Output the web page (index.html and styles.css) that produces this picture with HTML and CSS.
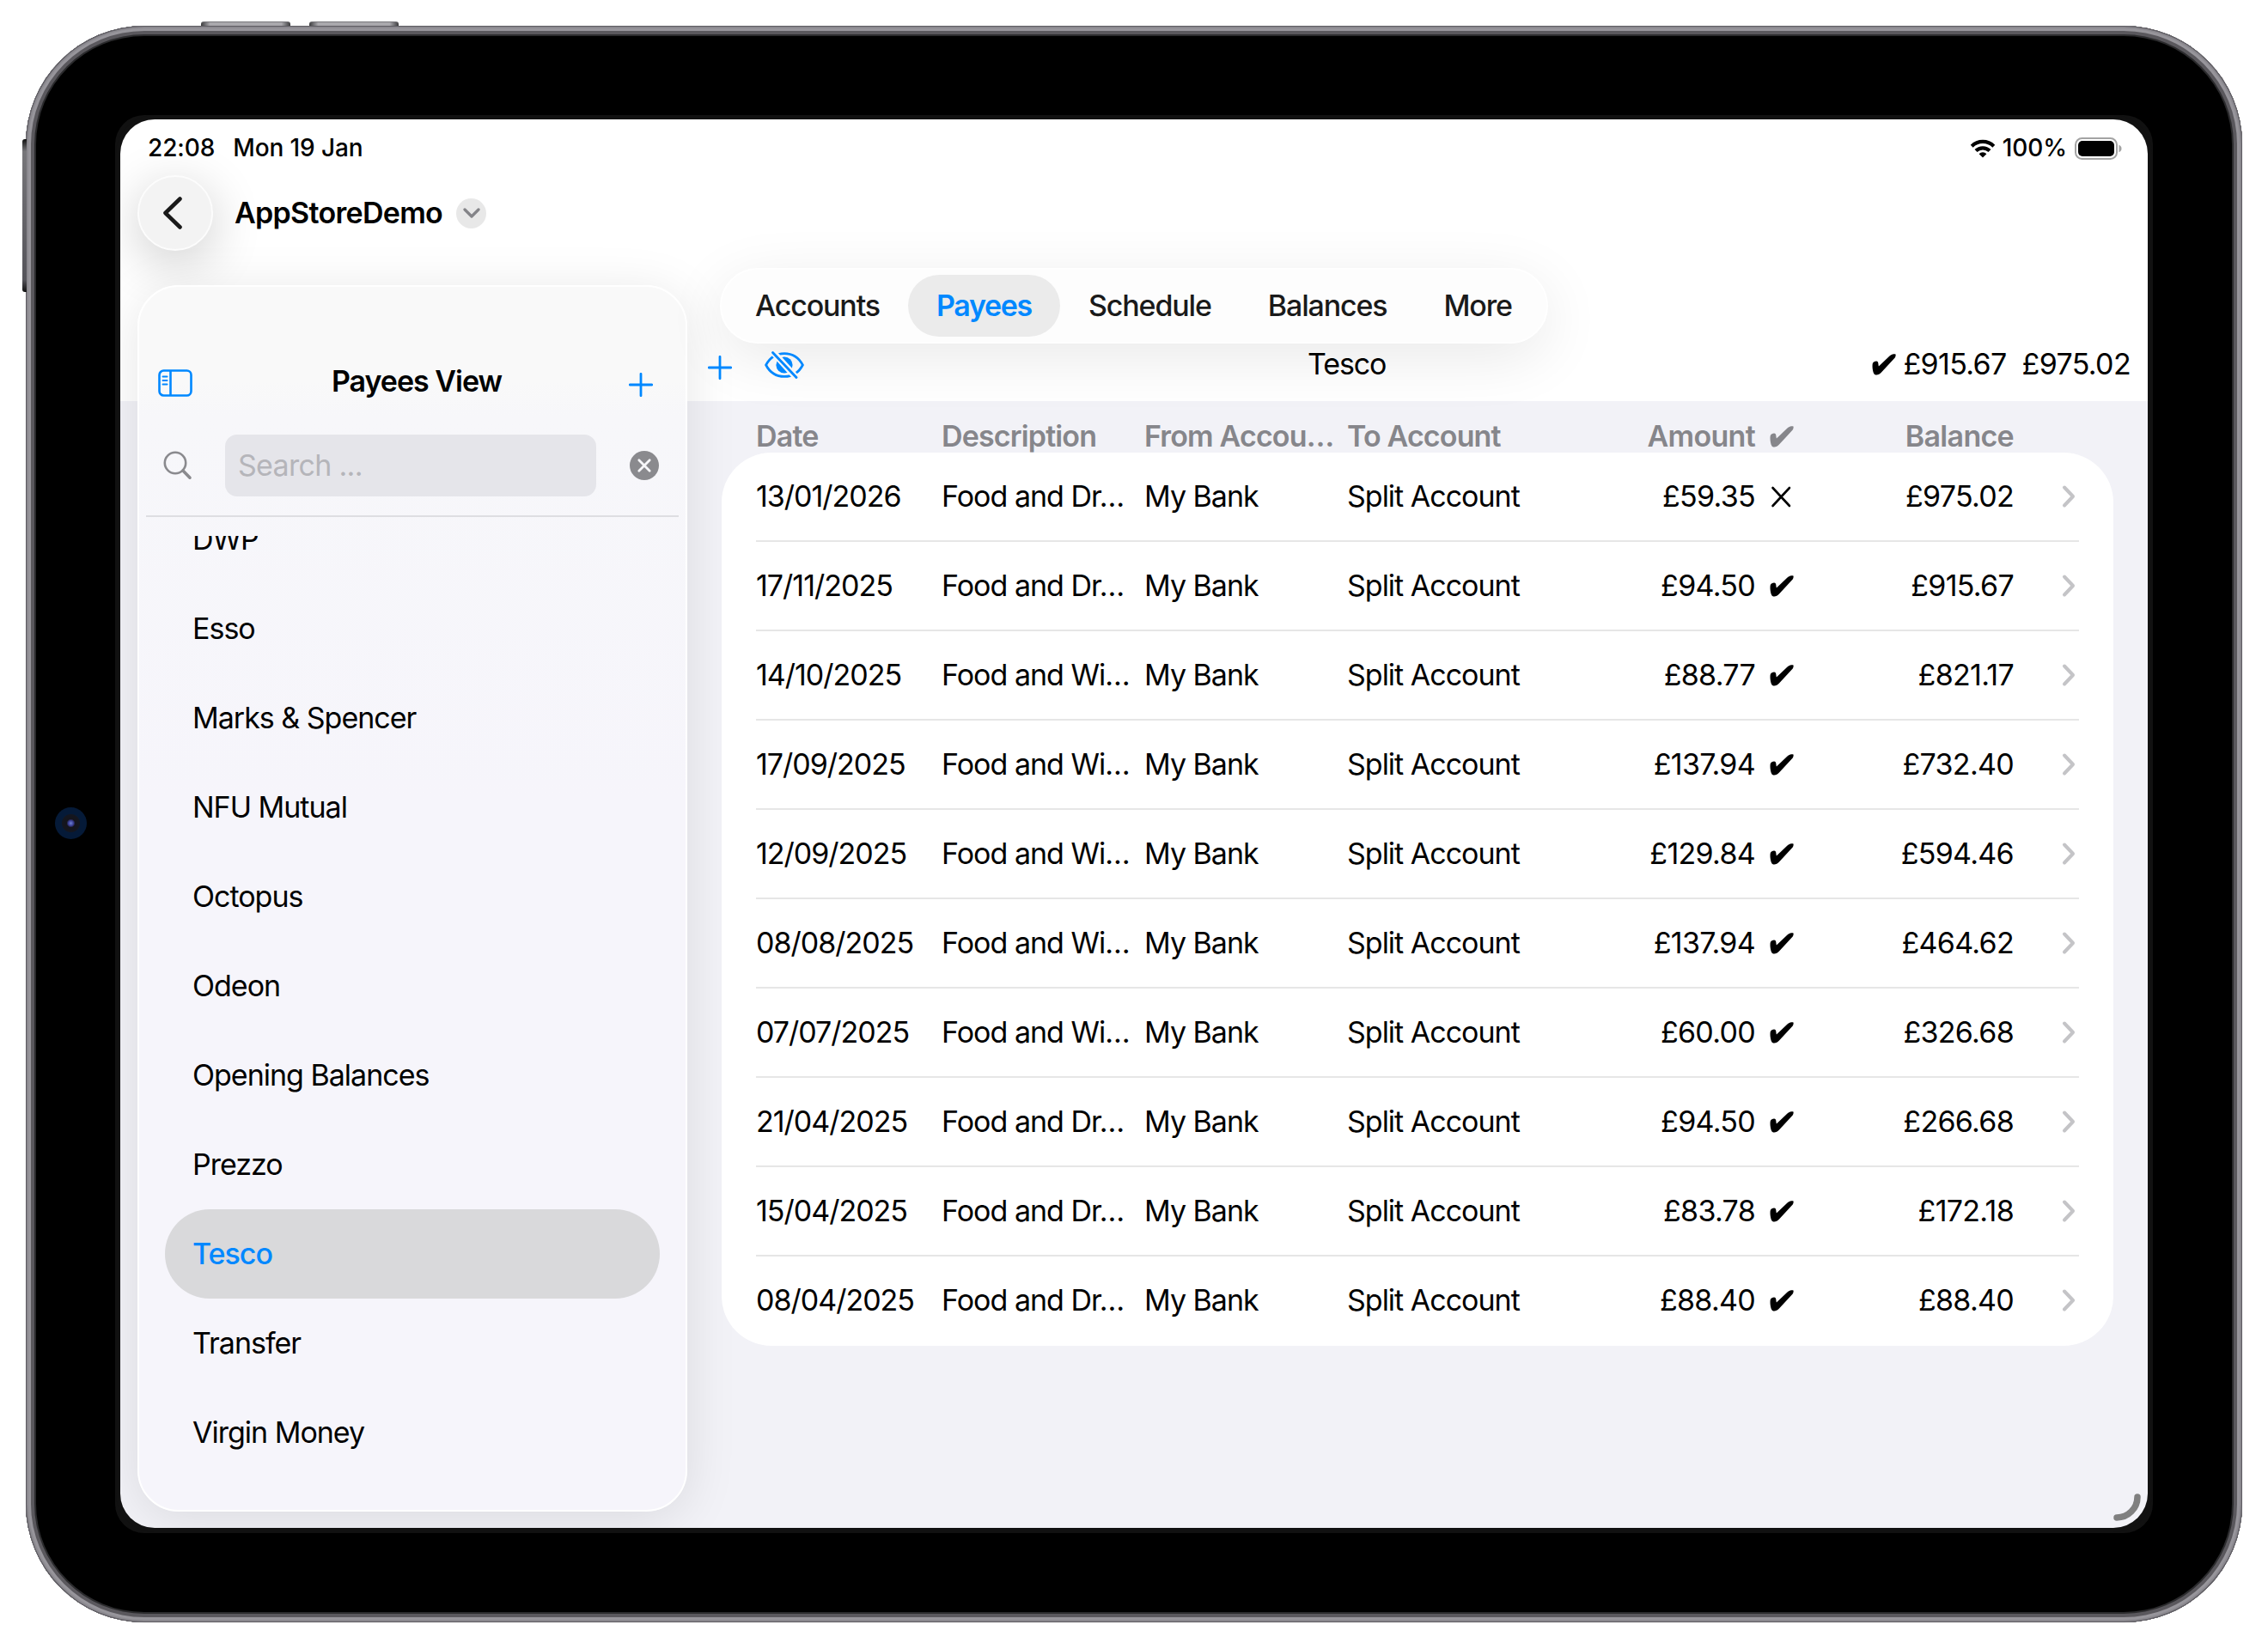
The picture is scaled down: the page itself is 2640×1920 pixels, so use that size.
FILE: index.html
```html
<!DOCTYPE html>
<html lang="en">
<head>
  <meta charset="UTF-8">
  <meta name="viewport" content="width=device-width, initial-scale=1.0">
  <title>AppStoreDemo - Payees</title>
  <link rel="stylesheet" href="styles.css">
</head>
<body>

<!-- shared icons -->
<svg class="sprite">
  <symbol id="tick" viewBox="0 0 28 25">
    <path d="M.8 11.2C1.6 8.8 5.8 7.6 6.9 9.4C7.5 10.6 7.4 12.6 7.9 14.6L20.5 2.4C22.6.5 25.8 0 27.5.4C28 2 27.2 4 25.8 5.6L11 21.6C8.8 24 5.4 25.4 3.2 24C1 22.6 0 14 .8 11.2Z" fill="currentColor"/>
  </symbol>
  <symbol id="cross" viewBox="0 0 28 25">
    <path d="M3.500 2L23 23M23 2L3.500 23" stroke="currentColor" stroke-width="2.6" stroke-linecap="round"/>
  </symbol>
  <symbol id="more" viewBox="0 0 16 28">
    <path d="M3 3.5L13 14L3 24.5" fill="none" stroke="#c4c4c7" stroke-width="4" stroke-linecap="round" stroke-linejoin="round"/>
  </symbol>
  <symbol id="plus" viewBox="0 0 28 28">
    <path d="M14 1.3V26.7M1.3 14H26.7" stroke="#0088ff" stroke-width="2.8" stroke-linecap="round"/>
  </symbol>
</svg>

<div class="device">
  <i class="key key-up"></i>
  <i class="key key-down"></i>
  <i class="key key-power"></i>
  <i class="camera"></i>

  <div class="screen">
    <header class="status">
      <span class="time">22:08</span>
      <span class="day">Mon 19 Jan</span>
      <svg class="wifi" viewBox="0 0 30 22">
        <g fill="none" stroke="#000" stroke-width="4.2">
          <path d="M2.2 8.2A18.2 18.2 0 0 1 27.8 8.2"/>
          <path d="M7 13.6A11.4 11.4 0 0 1 23 13.6"/>
        </g>
        <path d="M15 21.5L10.6 17.2A6.2 6.2 0 0 1 19.4 17.2Z"/>
      </svg>
      <span class="percent">100%</span>
      <svg class="battery" viewBox="0 0 56 26">
        <rect x="1" y="1" width="48" height="24" rx="7.5" fill="none" stroke="#a3a3a3" stroke-width="2"/>
        <rect x="4" y="4" width="42" height="18" rx="5"/>
        <path d="M51.500 8.800Q54.500 10 54.500 13T51.500 17.200Z" fill="#a3a3a3"/>
      </svg>
    </header>

    <div class="navbar">
      <button class="back">
        <svg width="26" height="42" viewBox="0 0 26 42"><path d="M21.500 4.500L4.500 21L21.500 37.500" fill="none" stroke="#1a1a1a" stroke-width="4.600" stroke-linecap="round" stroke-linejoin="round"/></svg>
      </button>
      <h1>AppStoreDemo</h1>
      <span class="dropdown">
        <svg width="20" height="12" viewBox="0 0 20 12"><path d="M2 2L10 10L18 2" fill="none" stroke="#848488" stroke-width="3.200" stroke-linecap="round" stroke-linejoin="round"/></svg>
      </span>
    </div>

    <div class="split">
      <aside class="sidebar">
        <div class="sidebar-head">
          <svg class="toggle" viewBox="0 0 40 32">
            <g fill="none" stroke="#0088ff" stroke-width="2.600">
              <rect x="1.500" y="1.500" width="37" height="29" rx="5"/>
              <path d="M14.500 1.500V30.500"/>
              <path d="M5.500 8.500H10.500M5.500 13H10.500M5.500 17.500H10.500" stroke-width="2" stroke-linecap="round"/>
            </g>
          </svg>
          <h2>Payees View</h2>
          <svg class="plus"><use href="#plus"/></svg>
        </div>
        <div class="search">
          <svg class="glass" viewBox="0 0 34 34">
            <g fill="none" stroke="#8a8a8e" stroke-linecap="round">
              <circle cx="14" cy="14" r="12.200" stroke-width="2.600"/>
              <path d="M23 23L31 31.200" stroke-width="3.600"/>
            </g>
          </svg>
          <div class="search-field">Search ...</div>
          <svg class="clear" viewBox="0 0 34 34">
            <circle cx="17" cy="17" r="17" fill="#8a8a8e"/>
            <path d="M10.800 10.800L23.200 23.200M23.200 10.800L10.800 23.200" stroke="#f7f7fa" stroke-width="2.800" stroke-linecap="round"/>
          </svg>
        </div>
        <ul class="payees">
          <li>DWP</li>
          <li>Esso</li>
          <li>Marks &amp; Spencer</li>
          <li>NFU Mutual</li>
          <li>Octopus</li>
          <li>Odeon</li>
          <li>Opening Balances</li>
          <li>Prezzo</li>
          <li class="selected">Tesco</li>
          <li>Transfer</li>
          <li>Virgin Money</li>
        </ul>
      </aside>

      <main class="detail">
        <nav class="tabs">
          <a>Accounts</a>
          <a class="active">Payees</a>
          <a>Schedule</a>
          <a>Balances</a>
          <a>More</a>
        </nav>

        <div class="toolbar">
          <svg class="plus"><use href="#plus"/></svg>
          <svg class="eye" viewBox="0 0 46 32">
            <path d="M1.600 16C6 7.600 14 2.600 23 2.600S40 7.600 44.400 16C40 24.400 32 29.400 23 29.400S6 24.400 1.600 16Z" fill="none" stroke="#0088ff" stroke-width="2.700"/>
            <circle cx="23" cy="16" r="9.600" fill="#0088ff"/>
            <path d="M7.500 -1.500L39 33" stroke="#f7f7f7" stroke-width="7.600"/>
            <path d="M9.500 1.500L37 30.500" stroke="#0088ff" stroke-width="2.800" stroke-linecap="round"/>
          </svg>
          <span class="name">Tesco</span>
          <svg class="mark"><use href="#tick"/></svg>
          <span class="cleared">£915.67</span>
          <span class="total">£975.02</span>
        </div>

        <div class="row head">
          <span>Date</span><span>Description</span><span>From Accou…</span><span>To Account</span><span class="num">Amount</span><svg class="mark"><use href="#tick"/></svg><span class="num">Balance</span>
        </div>
        <div class="table">
          <div class="row">
            <span>13/01/2026</span><span>Food and Dr…</span><span>My Bank</span><span>Split Account</span><span class="num">£59.35</span><svg class="mark"><use href="#cross"/></svg><span class="num">£975.02</span><svg class="more"><use href="#more"/></svg>
          </div>
          <div class="row">
            <span>17/11/2025</span><span>Food and Dr…</span><span>My Bank</span><span>Split Account</span><span class="num">£94.50</span><svg class="mark"><use href="#tick"/></svg><span class="num">£915.67</span><svg class="more"><use href="#more"/></svg>
          </div>
          <div class="row">
            <span>14/10/2025</span><span>Food and Wi…</span><span>My Bank</span><span>Split Account</span><span class="num">£88.77</span><svg class="mark"><use href="#tick"/></svg><span class="num">£821.17</span><svg class="more"><use href="#more"/></svg>
          </div>
          <div class="row">
            <span>17/09/2025</span><span>Food and Wi…</span><span>My Bank</span><span>Split Account</span><span class="num">£137.94</span><svg class="mark"><use href="#tick"/></svg><span class="num">£732.40</span><svg class="more"><use href="#more"/></svg>
          </div>
          <div class="row">
            <span>12/09/2025</span><span>Food and Wi…</span><span>My Bank</span><span>Split Account</span><span class="num">£129.84</span><svg class="mark"><use href="#tick"/></svg><span class="num">£594.46</span><svg class="more"><use href="#more"/></svg>
          </div>
          <div class="row">
            <span>08/08/2025</span><span>Food and Wi…</span><span>My Bank</span><span>Split Account</span><span class="num">£137.94</span><svg class="mark"><use href="#tick"/></svg><span class="num">£464.62</span><svg class="more"><use href="#more"/></svg>
          </div>
          <div class="row">
            <span>07/07/2025</span><span>Food and Wi…</span><span>My Bank</span><span>Split Account</span><span class="num">£60.00</span><svg class="mark"><use href="#tick"/></svg><span class="num">£326.68</span><svg class="more"><use href="#more"/></svg>
          </div>
          <div class="row">
            <span>21/04/2025</span><span>Food and Dr…</span><span>My Bank</span><span>Split Account</span><span class="num">£94.50</span><svg class="mark"><use href="#tick"/></svg><span class="num">£266.68</span><svg class="more"><use href="#more"/></svg>
          </div>
          <div class="row">
            <span>15/04/2025</span><span>Food and Dr…</span><span>My Bank</span><span>Split Account</span><span class="num">£83.78</span><svg class="mark"><use href="#tick"/></svg><span class="num">£172.18</span><svg class="more"><use href="#more"/></svg>
          </div>
          <div class="row">
            <span>08/04/2025</span><span>Food and Dr…</span><span>My Bank</span><span>Split Account</span><span class="num">£88.40</span><svg class="mark"><use href="#tick"/></svg><span class="num">£88.40</span><svg class="more"><use href="#more"/></svg>
          </div>
        </div>
      </main>
    </div>

    <!-- window resize handle -->
    <svg class="resize" viewBox="0 0 34 34"><path d="M5 29A24 24 0 0 0 29 5" fill="none" stroke="#808080" stroke-width="7.500" stroke-linecap="round"/></svg>
  </div>
</div>

</body>
</html>
```
FILE: styles.css
```css
:root {
  --blue: #0088ff;
  --grey-bg: #f2f2f7;
  --header: 328px;
}

* {
  box-sizing: border-box;
}

body {
  margin: 0;
  padding: 30px;
  width: 2640px;
  height: 1920px;
  overflow: hidden;
  background: #fff;
  color: #000;
  font-family: Inter, "Liberation Sans", sans-serif;
  font-size: 34px;
  line-height: 1.2;
  letter-spacing: -1px;
}

h1, h2, ul {
  margin: 0;
  padding: 0;
  font-size: 34px;
  font-weight: 600;
}

svg {
  display: block;
  flex: none;
}

.sprite {
  position: absolute;
  width: 0;
  height: 0;
}

/* device */
.device {
  position: relative;
  width: 2580px;
  height: 1859px;
  padding: 104px 105px 105px;
  border-radius: 138px;
  background: #111;
  box-shadow: inset 0 0 0 1px #5c5a60, inset 0 0 0 3px #8b898f, inset 0 0 0 6px #97959b, inset 0 0 0 10px #5a585d, inset 0 0 0 12px #2b2b2d, inset 0 0 0 104px #000;
}

.key {
  position: absolute;
  background: linear-gradient(90deg, #3c3c3e, #aaa9ad 10%, #aaa9ad 90%, #3c3c3e);
}

.key-up, .key-down {
  top: -5px;
  width: 104px;
  height: 5px;
  border-top: 1px solid #77767a;
  border-radius: 3px 3px 0 0;
}

.key-up {
  left: 204px;
}

.key-down {
  left: 330px;
}

.key-power {
  top: 132px;
  left: -4px;
  width: 5px;
  height: 178px;
  border-radius: 3px 0 0 3px;
  background: linear-gradient(#111, #77767a 8%, #55545a 92%, #111);
}

.camera {
  position: absolute;
  top: 910px;
  left: 34px;
  width: 37px;
  height: 37px;
  border-radius: 50%;
  background: radial-gradient(circle, #6d7fd0 0, #3a3f95 3px, #14141c 5px, #14161f 10px, #051a38 11px);
}

.screen {
  position: relative;
  display: flex;
  flex-direction: column;
  width: 2360px;
  height: 1640px;
  margin: 5px;
  border-radius: 40px;
  overflow: hidden;
  background: linear-gradient(#fff var(--header), var(--grey-bg) var(--header));
  box-shadow: 0 0 0 5px #111;
}

/* status bar */
.status {
  display: flex;
  align-items: center;
  height: 65px;
  padding: 2px 29px 0 32px;
  font-size: 28px;
  font-weight: 500;
  letter-spacing: -0.1px;
}

.day {
  margin-left: 21px;
}

.wifi {
  width: 30px;
  height: 22px;
  margin-left: auto;
}

.percent {
  margin-left: 8px;
}

.battery {
  width: 56px;
  height: 26px;
  margin-left: 9px;
}

.navbar {
  display: flex;
  align-items: center;
  height: 88px;
  padding-left: 20px;
}

.navbar h1 {
  letter-spacing: -0.7px;
}

.back {
  display: flex;
  align-items: center;
  justify-content: center;
  width: 88px;
  height: 88px;
  margin-right: 25px;
  padding: 0 7px 0 0;
  border: 2px solid #fcfcfc;
  border-radius: 50%;
  background: #f3f3f3;
  box-shadow: 0 14px 60px rgba(0, 0, 0, 0.2);
}

.dropdown {
  display: flex;
  align-items: center;
  justify-content: center;
  width: 35px;
  height: 35px;
  margin-left: 16px;
  border-radius: 50%;
  background: #e8e8e8;
}

.split {
  display: flex;
  flex: 1;
  padding-top: 20px;
}

/* sidebar */
.sidebar {
  display: flex;
  flex-direction: column;
  width: 640px;
  height: 1428px;
  margin: 20px 0 0 20px;
  padding: 0 8px;
  border: 2px solid #fff;
  border-radius: 48px;
  background: linear-gradient(#f9f9f9 110px, #f7f7fa 150px, #f6f5fb 600px);
  box-shadow: 0 8px 60px rgba(0, 0, 0, 0.1);
}

.sidebar-head {
  display: flex;
  align-items: center;
  justify-content: space-between;
  height: 66px;
  margin-top: 77px;
  padding: 0 30px 0 14px;
}

.sidebar-head h2 {
  margin-left: 14px;
}

.toggle {
  width: 40px;
  height: 32px;
  margin-top: 4px;
}

.plus {
  width: 28px;
  height: 28px;
}

.sidebar-head .plus {
  margin-top: 7px;
}

.search {
  display: flex;
  align-items: center;
  height: 125px;
  padding: 7px 23px 0 20px;
  border-bottom: 2px solid #dedee2;
}

.glass {
  width: 34px;
  height: 34px;
}

.search-field {
  width: 432px;
  height: 72px;
  margin-left: 38px;
  padding-left: 15px;
  border-radius: 14px;
  background: #e5e5ea;
  color: #b5b5ba;
  line-height: 72px;
  letter-spacing: -0.7px;
}

.clear {
  width: 34px;
  height: 34px;
  margin-left: auto;
}

.payees {
  margin: 22px 0 0;
  padding: 0 22px;
  overflow: hidden;
  list-style: none;
  font-weight: 400;
}

.payees li {
  height: 104px;
  padding-left: 32px;
  border-radius: 52px;
  line-height: 104px;
}

.payees li:first-child {
  margin-top: -48px;
}

.payees .selected {
  background: #d9d9db;
  color: var(--blue);
  font-weight: 500;
}

/* detail */
.detail {
  width: 1700px;
  padding-left: 23px;
}

.tabs {
  position: relative;
  display: flex;
  align-items: center;
  width: 964px;
  height: 88px;
  margin-left: 15px;
  padding: 6px;
  border: 2px solid #fff;
  border-radius: 44px;
  background: #fdfdfd;
  box-shadow: 0 16px 70px rgba(0, 0, 0, 0.09);
  color: #1a1a1a;
  font-weight: 500;
  letter-spacing: -1.15px;
}

.tabs a {
  height: 72px;
  padding: 0 33px;
  border-radius: 36px;
  line-height: 72px;
}

.tabs .active {
  background: #ebebeb;
  color: var(--blue);
  font-weight: 600;
  letter-spacing: -1.3px;
}

.toolbar {
  position: relative;
  display: flex;
  align-items: center;
  height: 67px;
  margin: -9px 0 9px;
  padding-right: 20px;
  letter-spacing: -0.65px;
}

.toolbar .plus {
  margin: 6px 0 0 1px;
}

.eye {
  width: 46px;
  height: 32px;
  margin: 1px 0 0 38px;
}

.name {
  margin-left: 586px;
  letter-spacing: -1.1px;
}

.mark {
  width: 28px;
  height: 25px;
}

.toolbar .mark {
  margin-left: auto;
}

.cleared {
  margin-left: 8px;
}

.total {
  margin-left: 18px;
}

.row {
  display: grid;
  grid-template-columns: 216px 236px 236px 272px 203px 100px 201px 76px;
  align-items: center;
  height: 104px;
  margin: 0 40px;
  white-space: nowrap;
}

.row .num {
  text-align: right;
  letter-spacing: -0.7px;
}

.row .mark {
  margin-left: 17px;
}

.row .more {
  width: 16px;
  height: 28px;
  margin-left: 56px;
}

.row.head {
  height: 60px;
  margin-left: 57px;
  padding-top: 21px;
  color: #86868b;
  font-weight: 600;
  letter-spacing: -0.85px;
}

.table {
  width: 1620px;
  margin-left: 17px;
  border-radius: 58px;
  background: #fff;
}

.table .row:not(:last-child) {
  border-bottom: 2px solid #e6e6e6;
}

.table .row:last-child {
  padding-bottom: 2px;
}

.resize {
  position: absolute;
  right: 7px;
  bottom: 7px;
  width: 34px;
  height: 34px;
}
```
